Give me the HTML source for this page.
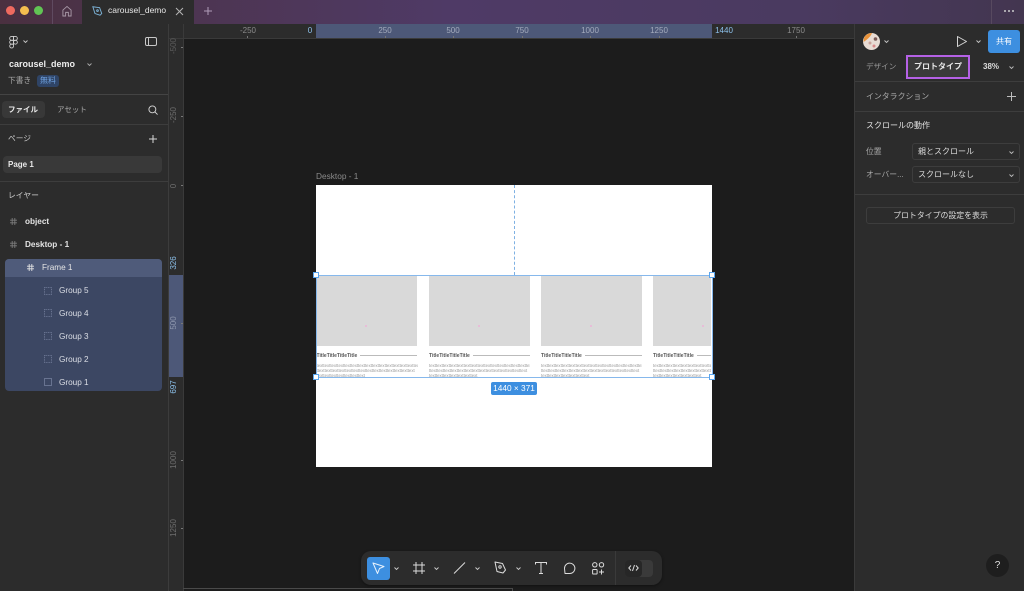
<!DOCTYPE html>
<html lang="ja">
<head>
<meta charset="utf-8">
<title>carousel_demo</title>
<style>
html,body{margin:0;padding:0;width:1024px;height:591px;overflow:hidden;background:#1c1c1c}
body{position:relative;font-family:"Liberation Sans","Noto Sans CJK JP",sans-serif;color:#e6e6e6;filter:blur(.3px)}
.a{position:absolute;white-space:nowrap}
.t{position:absolute;white-space:nowrap;font-size:8.5px;line-height:12px}
.b{font-weight:700}
svg{position:absolute;overflow:visible}
.chev{position:absolute;width:5px;height:3px;stroke-width:.9}
.hl{position:absolute;background:#444}
.rt{position:absolute;font-size:8px;line-height:10px;color:#8a8a8a;transform:translateX(-50%);white-space:nowrap}
.rv{position:absolute;font-size:8px;line-height:10px;color:#6e6e6e;transform:translate(-50%,-50%) rotate(-90deg);white-space:nowrap}
.tick{position:absolute;background:#777}
.card{position:absolute;top:276px;height:70px;background:#d9d9d9}
.title{position:absolute;top:352.5px;font-size:5px;line-height:6px;font-weight:700;color:#555;white-space:nowrap}
.line{position:absolute;top:355px;height:1px;background:#bbb}
.body{position:absolute;top:363px;height:14px;font-size:4.3px;line-height:5px;color:#999;white-space:nowrap;overflow:hidden}
.dot{position:absolute;top:325px;width:2px;height:2px;background:#eeb4d8;border-radius:50%}
.h{position:absolute;width:4px;height:4px;background:#fff;border:1px solid #5aa5ee}
</style>
</head>
<body>
<!-- top bar -->
<div class="a" style="left:0;top:0;width:1024px;height:24px;background:linear-gradient(90deg,#4a3040 0,#4d3552 200px,#4f3a66 450px,#4a3a60 800px,#433650 1024px)"></div>
<div class="a" style="left:5.5px;top:6px;width:9px;height:9px;border-radius:50%;background:#ee6a5f"></div>
<div class="a" style="left:19.5px;top:6px;width:9px;height:9px;border-radius:50%;background:#f5bd4f"></div>
<div class="a" style="left:34px;top:6px;width:9px;height:9px;border-radius:50%;background:#61c454"></div>
<div class="a" style="left:52px;top:0;width:1px;height:24px;background:#5f4a60"></div>
<svg style="left:62px;top:5px" width="10" height="12" viewBox="0 0 11 13" fill="none" stroke="#a99aa8" stroke-width="1"><path d="M1 5.5L5.5 1.5L10 5.5V12H7V8H4V12H1Z"/></svg>
<div class="a" style="left:82px;top:0;width:112px;height:24px;background:#2c2c2c"></div>
<svg style="left:92px;top:5px" width="11" height="12" viewBox="0 0 13 13" fill="none" stroke="#7db4d8" stroke-width="1.1"><path d="M1 1.5L9 2.5L11.5 9.5L9.5 11.5L3.5 9.5Z"/><circle cx="6.5" cy="6" r="1"/></svg>
<div class="t" style="left:108px;top:4px;font-size:8.5px;line-height:13px;color:#e6e6e6">carousel_demo</div>
<svg style="left:175px;top:7px" width="9" height="9" viewBox="0 0 9 9" stroke="#b5b5b5" stroke-width="1"><path d="M1 1L8 8M8 1L1 8"/></svg>
<svg style="left:203px;top:6px" width="10" height="10" viewBox="0 0 10 10" stroke="#b09cb8" stroke-width="1"><path d="M5 1V9M1 5H9"/></svg>
<div class="a" style="left:1004px;top:10px;width:2px;height:2px;background:#ccc;box-shadow:4px 0 #ccc,8px 0 #ccc;border-radius:50%"></div>
<div class="a" style="left:991px;top:0;width:1px;height:24px;background:#57495f"></div>

<!-- left panel -->
<div class="a" style="left:0;top:24px;width:168px;height:567px;background:#2c2c2c"></div>
<div class="a" style="left:168px;top:24px;width:1px;height:567px;background:#3c3c3c"></div>
<svg style="left:9px;top:36px" width="9" height="12" viewBox="0 0 9 12.5" fill="none" stroke="#d0d0d0" stroke-width=".9"><path d="M4.5.5H2.5a2 2 0 0 0 0 4h2z"/><path d="M4.5.5h2a2 2 0 0 1 0 4h-2z"/><path d="M4.5 4.5h-2a2 2 0 0 0 0 4h2z"/><circle cx="6.5" cy="6.5" r="2"/><path d="M2.5 8.5h2v1.5a2 2 0 1 1-2-1.5z"/></svg>
<svg class="chev" style="left:23px;top:40px" viewBox="0 0 5 3" fill="none" stroke="#c8c8c8"><path d="M.5.5L2.5 2.5L4.5.5"/></svg>
<svg style="left:145px;top:37px" width="12" height="9" viewBox="0 0 12 9" fill="none" stroke="#c8c8c8" stroke-width="1"><rect x=".5" y=".5" width="11" height="8" rx="1.5"/><path d="M3.5 .5V8.5"/></svg>
<div class="t b" style="left:9px;top:58px;font-size:9px;line-height:13px;color:#eee;font-weight:700">carousel_demo</div>
<svg class="chev" style="left:87px;top:63px" viewBox="0 0 5 3" fill="none" stroke="#aaa"><path d="M.5.5L2.5 2.5L4.5.5"/></svg>
<div class="t" style="left:8px;top:75px;color:#a8a8a8;font-size:7.7px">下書き</div>
<div class="a" style="left:37px;top:75px;width:22px;height:11.5px;background:#2f4466;border-radius:3px;color:#6fa2e0;font-size:8px;line-height:11.5px;text-align:center">無料</div>
<div class="hl" style="left:0;top:94px;width:168px;height:1px"></div>
<div class="a" style="left:2px;top:101px;width:43px;height:17px;background:#383838;border-radius:4px"></div>
<div class="t b" style="left:8px;top:104px;font-size:7.5px;color:#e8e8e8">ファイル</div>
<div class="t" style="left:57px;top:104px;font-size:7.5px;color:#a8a8a8">アセット</div>
<svg style="left:148px;top:105px" width="10" height="10" viewBox="0 0 11 11" fill="none" stroke="#d8d8d8" stroke-width="1"><circle cx="4.8" cy="4.8" r="3.8"/><path d="M7.5 7.5L10.5 10.5"/></svg>
<div class="hl" style="left:0;top:124px;width:168px;height:1px;background:#3d3d3d"></div>
<div class="t" style="left:8px;top:133px;font-size:7.7px;color:#cfcfcf">ページ</div>
<svg style="left:148px;top:134px" width="10" height="10" viewBox="0 0 10 10" stroke="#d8d8d8" stroke-width="1"><path d="M5 1V9M1 5H9"/></svg>
<div class="a" style="left:2.5px;top:156px;width:159.5px;height:17px;background:#393939;border-radius:4px"></div>
<div class="t b" style="left:8px;top:158.5px;font-size:8px;color:#e8e8e8">Page 1</div>
<div class="hl" style="left:0;top:181px;width:168px;height:1px;background:#3d3d3d"></div>
<div class="t" style="left:8px;top:190px;font-size:7.8px;color:#cfcfcf">レイヤー</div>
<svg style="left:10px;top:218px" width="7" height="7" viewBox="0 0 8 8" stroke="#7d7d7d" stroke-width="1"><path d="M2.5 0V8M5.5 0V8M0 2.5H8M0 5.5H8"/></svg>
<div class="t b" style="left:25px;top:216px;font-size:8.2px;color:#e4e4e4">object</div>
<svg style="left:10px;top:241px" width="7" height="7" viewBox="0 0 8 8" stroke="#7d7d7d" stroke-width="1"><path d="M2.5 0V8M5.5 0V8M0 2.5H8M0 5.5H8"/></svg>
<div class="t b" style="left:25px;top:239px;font-size:8.2px;color:#e4e4e4">Desktop - 1</div>
<div class="a" style="left:5px;top:259px;width:157px;height:132px;background:#3c4763;border-radius:4px"></div>
<div class="a" style="left:5px;top:259px;width:157px;height:17.5px;background:#4f5b7a;border-radius:4px 4px 0 0"></div>
<svg style="left:27px;top:264px" width="7" height="7" viewBox="0 0 8 8" stroke="#e4e4e4" stroke-width="1"><path d="M2.5 0V8M5.5 0V8M0 2.5H8M0 5.5H8"/></svg>
<div class="t" style="left:42px;top:262px;font-size:8.2px;color:#e6e6e6">Frame 1</div>
<svg style="left:44px;top:287px" width="8" height="8" fill="none" stroke="#687390"><rect x=".5" y=".5" width="7" height="7" stroke-dasharray="1 .7"/></svg>
<div class="t" style="left:59px;top:285px;font-size:8.2px;color:#dcdfe6">Group 5</div>
<svg style="left:44px;top:309px" width="8" height="8" fill="none" stroke="#687390"><rect x=".5" y=".5" width="7" height="7" stroke-dasharray="1 .7"/></svg>
<div class="t" style="left:59px;top:308px;font-size:8.2px;color:#dcdfe6">Group 4</div>
<svg style="left:44px;top:332px" width="8" height="8" fill="none" stroke="#687390"><rect x=".5" y=".5" width="7" height="7" stroke-dasharray="1 .7"/></svg>
<div class="t" style="left:59px;top:331px;font-size:8.2px;color:#dcdfe6">Group 3</div>
<svg style="left:44px;top:355px" width="8" height="8" fill="none" stroke="#687390"><rect x=".5" y=".5" width="7" height="7" stroke-dasharray="1 .7"/></svg>
<div class="t" style="left:59px;top:354px;font-size:8.2px;color:#dcdfe6">Group 2</div>
<svg style="left:44px;top:378px" width="8" height="8" fill="none" stroke="#687390"><rect x=".5" y=".5" width="7" height="7"/></svg>
<div class="t" style="left:59px;top:377px;font-size:8.2px;color:#dcdfe6">Group 1</div>

<!-- rulers -->
<div class="a" style="left:169px;top:24px;width:685px;height:15px;background:#2c2c2c"></div>
<div class="a" style="left:169px;top:39px;width:15px;height:552px;background:#2c2c2c"></div>
<div class="a" style="left:183px;top:24px;width:1px;height:567px;background:#3a3a3a"></div>
<div class="a" style="left:169px;top:38px;width:685px;height:1px;background:#3a3a3a"></div>
<div class="a" style="left:316px;top:24px;width:396px;height:14px;background:#4d5878"></div>
<div class="a" style="left:169px;top:275px;width:14px;height:102px;background:#4d5878"></div>
<div class="rt" style="left:248px;top:25.5px">-250</div>
<div class="rt" style="left:310px;top:25.5px;color:#8cc0ea">0</div>
<div class="rt" style="left:385px;top:25.5px;color:#a4abbd">250</div>
<div class="rt" style="left:453px;top:25.5px;color:#a4abbd">500</div>
<div class="rt" style="left:522px;top:25.5px;color:#a4abbd">750</div>
<div class="rt" style="left:590px;top:25.5px;color:#a4abbd">1000</div>
<div class="rt" style="left:659px;top:25.5px;color:#a4abbd">1250</div>
<div class="rt" style="left:724px;top:25.5px;color:#8cc0ea">1440</div>
<div class="rt" style="left:796px;top:25.5px">1750</div>
<div class="tick" style="left:247px;top:36px;width:1px;height:2px"></div>
<div class="tick" style="left:385px;top:36px;width:1px;height:2px"></div>
<div class="tick" style="left:453px;top:36px;width:1px;height:2px"></div>
<div class="tick" style="left:522px;top:36px;width:1px;height:2px"></div>
<div class="tick" style="left:590px;top:36px;width:1px;height:2px"></div>
<div class="tick" style="left:659px;top:36px;width:1px;height:2px"></div>
<div class="tick" style="left:796px;top:36px;width:1px;height:2px"></div>
<div class="rv" style="left:173.5px;top:46px;color:#5c5c5c">-500</div>
<div class="rv" style="left:173.5px;top:115px">-250</div>
<div class="rv" style="left:173.5px;top:185.5px">0</div>
<div class="rv" style="left:173.5px;top:263px;color:#8cc0ea">326</div>
<div class="rv" style="left:173.5px;top:323px;color:#8e97ad">500</div>
<div class="rv" style="left:173.5px;top:387px;color:#8cc0ea">697</div>
<div class="rv" style="left:173.5px;top:460px">1000</div>
<div class="rv" style="left:173.5px;top:528px">1250</div>
<div class="tick" style="left:181px;top:47px;width:2px;height:1px"></div>
<div class="tick" style="left:181px;top:116px;width:2px;height:1px"></div>
<div class="tick" style="left:181px;top:185px;width:2px;height:1px"></div>
<div class="tick" style="left:181px;top:323px;width:2px;height:1px"></div>
<div class="tick" style="left:181px;top:460px;width:2px;height:1px"></div>
<div class="tick" style="left:181px;top:528px;width:2px;height:1px"></div>

<!-- canvas -->
<div class="a" style="left:184px;top:39px;width:670px;height:552px;background:#1c1c1c"></div>
<div class="t" style="left:316px;top:170px;font-size:8.3px;color:#8a8a8a">Desktop - 1</div>
<div class="a" style="left:316px;top:185px;width:396px;height:282px;background:#fff"></div>
<div class="a" style="left:513.5px;top:185px;width:0;height:90px;border-left:1px dashed #7eb1e3"></div>

<div class="card" style="left:316px;width:101px"></div>
<div class="card" style="left:428.5px;width:101.5px"></div>
<div class="card" style="left:541px;width:101px"></div>
<div class="card" style="left:653px;width:58px"></div>
<div class="dot" style="left:365px"></div>
<div class="dot" style="left:478px"></div>
<div class="dot" style="left:590px"></div>
<div class="dot" style="left:702px"></div>

<div class="title" style="left:316.5px">TitleTitleTitleTitle</div>
<div class="line" style="left:360px;width:57px"></div>
<div class="body" style="left:316.5px;width:101px">texttexttexttexttexttexttexttexttexttexttexttexttexttexttex<br>ttexttexttexttexttexttexttexttexttexttexttexttexttexttext<br>texttexttexttexttexttexttext</div>
<div class="title" style="left:429px">TitleTitleTitleTitle</div>
<div class="line" style="left:473px;width:57px"></div>
<div class="body" style="left:429px;width:101px">texttexttexttexttexttexttexttexttexttexttexttexttexttexttex<br>ttexttexttexttexttexttexttexttexttexttexttexttexttexttext<br>texttexttexttexttexttexttext</div>
<div class="title" style="left:541px">TitleTitleTitleTitle</div>
<div class="line" style="left:585px;width:57px"></div>
<div class="body" style="left:541px;width:101px">texttexttexttexttexttexttexttexttexttexttexttexttexttexttex<br>ttexttexttexttexttexttexttexttexttexttexttexttexttexttext<br>texttexttexttexttexttexttext</div>
<div class="title" style="left:653px">TitleTitleTitleTitle</div>
<div class="line" style="left:697px;width:14px"></div>
<div class="body" style="left:653px;width:58px">texttexttexttexttexttexttexttexttexttexttexttexttexttexttex<br>ttexttexttexttexttexttexttexttexttexttexttexttexttexttext<br>texttexttexttexttexttexttext</div>

<div class="a" style="left:315.5px;top:274.5px;width:395.5px;height:101.5px;border:1.5px solid #86b8ec;box-sizing:content-box"></div>
<div class="h" style="left:313px;top:272px"></div>
<div class="h" style="left:708.5px;top:272px"></div>
<div class="h" style="left:313px;top:374px"></div>
<div class="h" style="left:708.5px;top:374px"></div>
<div class="a" style="left:491px;top:382px;width:46px;height:13px;background:#3d8fe0;border-radius:2px;color:#fff;font-size:8.3px;line-height:13px;text-align:center">1440 × 371</div>

<!-- right panel -->
<div class="a" style="left:854px;top:24px;width:170px;height:567px;background:#2c2c2c"></div>
<div class="a" style="left:854px;top:24px;width:1px;height:567px;background:#3a3a3a"></div>
<svg style="left:863px;top:33px" width="17" height="17" viewBox="0 0 17 17"><circle cx="8.5" cy="8.5" r="8.5" fill="#e8dcd4"/><path d="M1 5A8.5 8.5 0 0 1 9 0C8 3 5 6 .5 9Z" fill="#e8923a"/><circle cx="7" cy="10" r="1.5" fill="#c9a39a"/><circle cx="12.5" cy="6" r="1.8" fill="#7a5a56"/><circle cx="11" cy="13" r="1.5" fill="#d88a8a"/></svg>
<svg class="chev" style="left:884px;top:40px" viewBox="0 0 5 3" fill="none" stroke="#c8c8c8"><path d="M.5.5L2.5 2.5L4.5.5"/></svg>
<svg style="left:957px;top:36px" width="10" height="11" viewBox="0 0 10 11" fill="none" stroke="#d4d4d4" stroke-width="1"><path d="M.5.5L9.5 5.5L.5 10.5Z" stroke-linejoin="round"/></svg>
<svg class="chev" style="left:976px;top:40px" viewBox="0 0 5 3" fill="none" stroke="#c8c8c8"><path d="M.5.5L2.5 2.5L4.5.5"/></svg>
<div class="a" style="left:988px;top:30px;width:32px;height:23px;background:#3d8fe0;border-radius:3px;color:#fff;font-size:8px;line-height:23px;text-align:center">共有</div>
<div class="t" style="left:866px;top:61px;font-size:7.6px;color:#9a9a9a">デザイン</div>
<div class="a" style="left:906px;top:55px;width:64px;height:24px;box-sizing:border-box;border:2.5px solid #b561e6;background:#3a3a3a"></div>
<div class="t b" style="left:914px;top:61px;font-size:8px;color:#e8e8e8">プロトタイプ</div>
<div class="t b" style="left:983px;top:61px;font-size:8px;color:#dcdcdc">38%</div>
<svg class="chev" style="left:1009px;top:66px" viewBox="0 0 5 3" fill="none" stroke="#bbb"><path d="M.5.5L2.5 2.5L4.5.5"/></svg>
<div class="hl" style="left:855px;top:81px;width:169px;height:1px;background:#3d3d3d"></div>
<div class="t" style="left:866px;top:91px;font-size:7.9px;color:#ababab">インタラクション</div>
<svg style="left:1007px;top:92px" width="9" height="9" viewBox="0 0 9 9" stroke="#bdbdbd" stroke-width="1"><path d="M4.5 0V9M0 4.5H9"/></svg>
<div class="hl" style="left:855px;top:111px;width:169px;height:1px;background:#3d3d3d"></div>
<div class="t" style="left:866px;top:120px;font-size:8px;color:#e4e4e4">スクロールの動作</div>
<div class="t" style="left:866px;top:146px;font-size:7.8px;color:#a8a8a8">位置</div>
<div class="a" style="left:912px;top:143px;width:108px;height:16.5px;box-sizing:border-box;border:1px solid #3d3d3d;border-radius:3px"></div>
<div class="t" style="left:918px;top:146px;font-size:8px;color:#dcdcdc">親とスクロール</div>
<svg class="chev" style="left:1009px;top:151px" viewBox="0 0 5 3" fill="none" stroke="#bbb"><path d="M.5.5L2.5 2.5L4.5.5"/></svg>
<div class="t" style="left:866px;top:169px;font-size:7.8px;color:#a8a8a8">オーバー...</div>
<div class="a" style="left:912px;top:166px;width:108px;height:16.5px;box-sizing:border-box;border:1px solid #3d3d3d;border-radius:3px"></div>
<div class="t" style="left:918px;top:169px;font-size:8px;color:#dcdcdc">スクロールなし</div>
<svg class="chev" style="left:1009px;top:174px" viewBox="0 0 5 3" fill="none" stroke="#bbb"><path d="M.5.5L2.5 2.5L4.5.5"/></svg>
<div class="hl" style="left:855px;top:194px;width:169px;height:1px;background:#3d3d3d"></div>
<div class="a" style="left:866px;top:207px;width:149px;height:17px;box-sizing:border-box;border:1px solid #3d3d3d;border-radius:3px;font-size:7.9px;line-height:15px;text-align:center;color:#dcdcdc">プロトタイプの設定を表示</div>
<div class="a" style="left:986px;top:554px;width:23px;height:23px;border-radius:50%;background:#1e1e1e;color:#e0e0e0;font-size:10px;line-height:23px;text-align:center">?</div>

<!-- toolbar -->
<div class="a" style="left:183px;top:588px;width:330px;height:3px;border-top:1px solid #4a4a4a;border-right:1px solid #4a4a4a;box-sizing:border-box"></div>
<div class="a" style="left:361px;top:551px;width:301px;height:34px;background:#2c2c2c;border-radius:10px;box-shadow:0 1px 3px rgba(0,0,0,.4)"></div>
<div class="a" style="left:366.5px;top:556.5px;width:23px;height:23px;background:#3d8fe0;border-radius:3px"></div>
<svg style="left:372px;top:562px" width="13" height="13" viewBox="0 0 13 13" fill="none" stroke="#e8f2fc" stroke-width="1"><path d="M1 1L12 4.5L7.5 6.5L5.5 11.5Z" stroke-linejoin="round"/></svg>
<svg class="chev" style="left:394px;top:567px" viewBox="0 0 5 3" fill="none" stroke="#ccc"><path d="M.5.5L2.5 2.5L4.5.5"/></svg>
<svg style="left:413px;top:562px" width="12" height="12" viewBox="0 0 12 12" stroke="#dcdcdc" stroke-width="1"><path d="M3 0V12M9 0V12M0 3H12M0 9H12"/></svg>
<svg class="chev" style="left:434px;top:567px" viewBox="0 0 5 3" fill="none" stroke="#ccc"><path d="M.5.5L2.5 2.5L4.5.5"/></svg>
<svg style="left:453px;top:562px" width="13" height="12" viewBox="0 0 13 12" stroke="#dcdcdc" stroke-width="1"><path d="M1 11.5L12 .5"/></svg>
<svg class="chev" style="left:475px;top:567px" viewBox="0 0 5 3" fill="none" stroke="#ccc"><path d="M.5.5L2.5 2.5L4.5.5"/></svg>
<svg style="left:494px;top:561px" width="13" height="14" viewBox="0 0 13 14" fill="none" stroke="#dcdcdc" stroke-width="1"><path d="M1 1L8.5 2.5L11.5 9L9 12L3 10.5Z" stroke-linejoin="round"/><circle cx="6" cy="6" r="1.2"/></svg>
<svg class="chev" style="left:516px;top:567px" viewBox="0 0 5 3" fill="none" stroke="#ccc"><path d="M.5.5L2.5 2.5L4.5.5"/></svg>
<svg style="left:535px;top:562px" width="12" height="12" viewBox="0 0 12 12" fill="none" stroke="#dcdcdc" stroke-width="1"><path d="M.5 2.5V.5H11.5V2.5M6 .5V11.5M4 11.5H8"/></svg>
<svg style="left:563px;top:562px" width="13" height="13" viewBox="0 0 13 13" fill="none" stroke="#dcdcdc" stroke-width="1"><path d="M2 11.5H7A5.2 5.2 0 1 0 1.5 6.5Z" stroke-linejoin="round"/></svg>
<svg style="left:592px;top:562px" width="13" height="13" viewBox="0 0 13 13" fill="none" stroke="#dcdcdc" stroke-width="1"><circle cx="2.8" cy="2.8" r="2.2"/><circle cx="9.5" cy="2.8" r="2.2"/><rect x=".6" y="7.5" width="4.5" height="4.5" rx=".8"/><path d="M9.5 7.5V12.5M7 10H12"/></svg>
<div class="a" style="left:615px;top:551px;width:1px;height:34px;background:#3a3a3a"></div>
<div class="a" style="left:625px;top:560px;width:28px;height:17px;background:#3a3a3a;border-radius:4px"></div>
<div class="a" style="left:625px;top:560px;width:16.5px;height:17px;background:#272727;border-radius:4px"></div>
<svg style="left:628px;top:564px" width="11" height="8" viewBox="0 0 11 8" fill="none" stroke="#dcdcdc" stroke-width="1"><path d="M3 1.5L.8 4L3 6.5M8 1.5L10.2 4L8 6.5M6.5 1L4.5 7"/></svg>
</body>
</html>
